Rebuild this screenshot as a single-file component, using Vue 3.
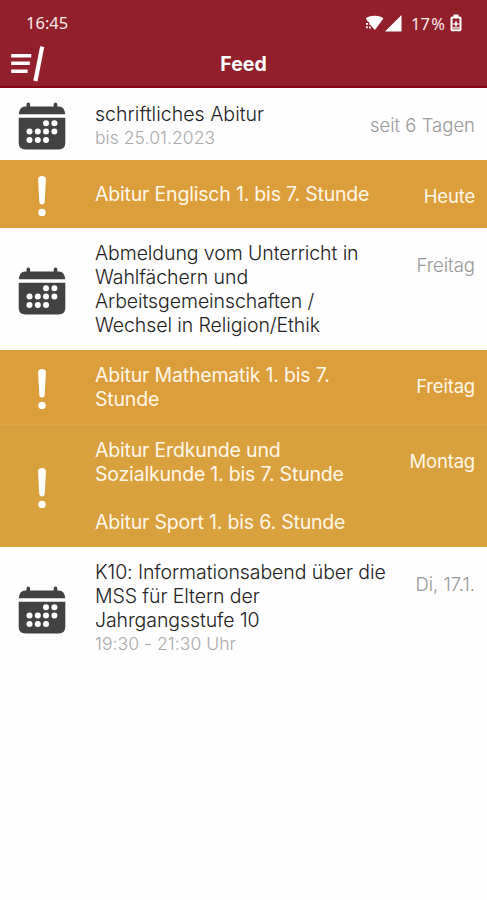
<template>
  <div class="app">
    <header class="header">
      <div class="status">
        <span class="clock">16:45</span>
        <div class="indicators">
          <svg class="wifi" width="19" height="16" viewBox="0 0 19 16">
            <path d="M.8 3.500Q3.500 1 9.500 .8T18.400 3.500L10.300 14.500H9.300L5.400 9.800H4.300V7.500L2.600 6.200Z" />
            <path d="M1 8h2v1.700H1zM1 11.300h1.800v2H1zM4 11.500h1.800v2H4z" />
          </svg>
          <svg class="signal" width="17" height="17" viewBox="0 0 17 17">
            <path d="M16.500 0V16.500H0Z" />
          </svg>
          <span class="percent">17 %</span>
          <svg class="battery" width="12" height="18" viewBox="0 0 12 18">
            <path d="M3.500 .5h5v2H10q1.500 0 1.500 1.500v11.500q0 1.800-1.500 1.800H2Q.5 17.300 .5 15.500V4Q.5 2.500 2 2.500h1.500zM2.600 4.600v10.600h6.800V4.600z" fill-rule="evenodd" />
            <path d="M5.200 7.200h1.600v2h1.900v1.600H6.800v1.800H5.200v-1.800H3.300V9.200h1.900zM3 13.300h6v1.200H3z" />
          </svg>
        </div>
      </div>
      <div class="toolbar">
        <svg class="menu" width="36" height="36" viewBox="0 0 36 36">
          <path d="M2.200 9.700H22.300M2.200 17.300H20.800M2.200 25.200H18.600" stroke-width="3.600" />
          <path d="M33.200 .6L26.400 35" stroke-width="4.200" />
        </svg>
        <h1>Feed</h1>
      </div>
    </header>

    <main>
      <div v-for="item in feed" :key="item.id" class="item" :class="{ exam: item.exam }">
        <div class="icon">
          <svg v-if="item.exam" width="10" height="42" viewBox="0 0 10 42">
            <path d="M5 1C7.800 1 9 2.400 8.900 4.500L7.700 27Q7.500 29.500 5 29.500T2.300 27L1.100 4.500C1 2.400 2.200 1 5 1Z" />
            <circle cx="5" cy="37.400" r="3.700" />
          </svg>
          <svg v-else width="48" height="48" viewBox="0 0 48 48">
            <path d="M.7 12.300Q1.500 4.800 7 4.500H8.500V2.500Q8.500 .5 10.300 .5T12.100 2.500V4.500H35.700V2.500Q35.700 .5 37.500 .5T39.300 2.500V4.500H41Q46.500 4.800 47.300 12.300Z" />
            <path d="M.7 15.800H47.300V40.500Q47.300 47.500 40.500 47.500H7.500Q.7 47.500 .7 40.500Z" />
            <circle v-for="(dot, i) in dots" :key="i" :cx="dot[0]" :cy="dot[1]" r="3" fill="#fff" />
          </svg>
        </div>
        <div class="content">
          <p v-for="line in item.lines" :key="line" class="title">{{ line }}</p>
          <p v-if="item.sub" class="sub">{{ item.sub }}</p>
        </div>
        <span class="date">{{ item.date }}</span>
      </div>
    </main>
  </div>
</template>

<script setup>
const dots = [
  [28, 21.2], [36.4, 21.2],
  [11.5, 29.6], [19.8, 29.6], [28, 29.6], [36.4, 29.6],
  [11.5, 38], [19.8, 38], [28, 38]
]

const feed = [
  { id: 1, lines: ['schriftliches Abitur'], sub: 'bis 25.01.2023', date: 'seit 6 Tagen' },
  { id: 2, exam: true, lines: ['Abitur Englisch 1. bis 7. Stunde'], date: 'Heute' },
  {
    id: 3,
    lines: ['Abmeldung vom Unterricht in\nWahlfächern und\nArbeitsgemeinschaften /\nWechsel in Religion/Ethik'],
    date: 'Freitag'
  },
  { id: 4, exam: true, lines: ['Abitur Mathematik 1. bis 7.\nStunde'], date: 'Freitag' },
  {
    id: 5,
    exam: true,
    lines: ['Abitur Erdkunde und\nSozialkunde 1. bis 7. Stunde', 'Abitur Sport 1. bis 6. Stunde'],
    date: 'Montag'
  },
  {
    id: 6,
    lines: ['K10: Informationsabend über die\nMSS für Eltern der\nJahrgangsstufe 10'],
    sub: '19:30 - 21:30 Uhr',
    date: 'Di, 17.1.'
  }
]
</script>

<style>
body {
  background-color: #fefefe;
}
</style>

<style scoped>
.app {
  min-height: 900px;
  font-family: Inter, "Liberation Sans", sans-serif;
  background-color: #fefefe;
}

.header {
  box-sizing: border-box;
  height: 88px;
  background-color: #91202b;
  border-bottom: 2px solid #870810;
  color: #fff;
}

.status {
  display: flex;
  justify-content: space-between;
  height: 45px;
  padding: 0 25px 0 26px;
  font-family: "Noto Sans", sans-serif;
  font-size: 16.500px;
  color: #fbe9e7;
}

.clock {
  line-height: 46px;
}

.indicators {
  display: flex;
  align-items: center;
  padding-top: 1px;
}

.indicators svg {
  fill: #fff;
}

.signal {
  margin-left: 1px;
}

.percent {
  margin: 0 5px 0 9px;
  word-spacing: -3px;
}

.toolbar {
  display: grid;
  grid-template-columns: 1fr auto 1fr;
  align-items: center;
  height: 37px;
}

.menu {
  margin-left: 9px;
  fill: none;
  stroke: #fff;
}

h1 {
  margin: 0;
  font-size: 19.500px;
  font-weight: 700;
}

.item {
  box-sizing: border-box;
  display: flex;
  align-items: center;
  min-height: 68px;
  padding-right: 12px;
  color: #222;
}

.icon {
  display: flex;
  justify-content: center;
  width: 84px;
  padding-top: 4px;
  fill: #424242;
}

.content {
  flex-grow: 1;
  padding: 13px 0 13px 11px;
}

.item:first-child .content {
  padding-top: 14px;
  padding-bottom: 11px;
}

.title {
  margin: 0;
  font-size: 19.500px;
  font-weight: 300;
  line-height: 24px;
  letter-spacing: -0.080px;
  white-space: pre;
}

.item:first-child .title {
  letter-spacing: 0.040px;
}

.title + .title {
  margin-top: 24px;
}

.sub {
  margin: 0;
  font-size: 17.500px;
  font-weight: 300;
  line-height: 23px;
  color: #aaa;
}

.sub:last-child {
  letter-spacing: 0.060px;
}

.date {
  align-self: flex-start;
  margin-top: 25px;
  font-size: 18.500px;
  font-weight: 300;
  line-height: 24px;
  color: #999;
  white-space: nowrap;
}

.exam {
  background-color: #dc9e3a;
  color: #fff8ea;
}

.exam .icon {
  fill: #fff;
}

.exam .title,
.exam .date {
  font-weight: 400;
  letter-spacing: -0.190px;
  color: #fff8ea;
}

.exam .date {
  margin-top: 24px;
}

.exam + .exam {
  border-top: 1px solid #e0a44c;
  background-color: #d9a03e;
}
</style>
